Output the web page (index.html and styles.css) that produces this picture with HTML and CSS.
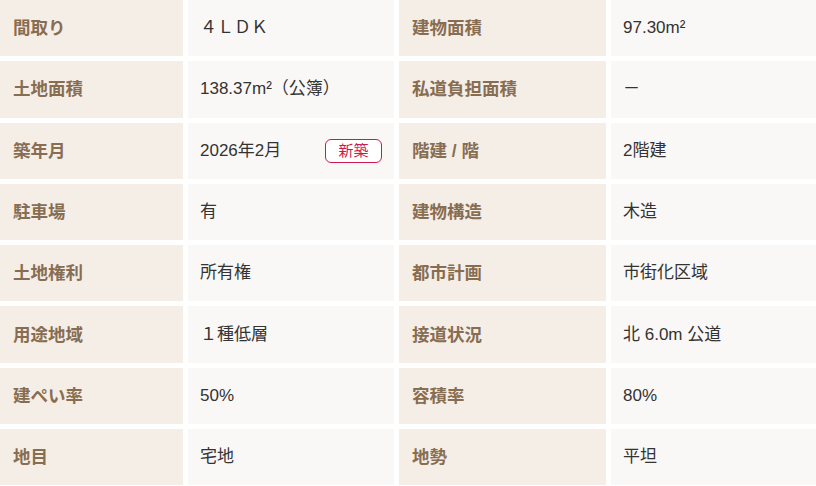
FILE: index.html
```html
<!DOCTYPE html>
<html lang="ja">
<head>
<meta charset="utf-8">
<title>物件概要</title>
<link rel="stylesheet" href="styles.css">
</head>
<body>
<div class="spec">
  <div class="lbl">間取り</div><div class="val">４ＬＤＫ</div>
  <div class="lbl">建物面積</div><div class="val">97.30m²</div>

  <div class="lbl">土地面積</div><div class="val">138.37m²（公簿）</div>
  <div class="lbl">私道負担面積</div><div class="val">－</div>

  <div class="lbl">築年月</div><div class="val val-badge"><span>2026年2月</span><span class="badge">新築</span></div>
  <div class="lbl">階建 / 階</div><div class="val">2階建</div>

  <div class="lbl">駐車場</div><div class="val">有</div>
  <div class="lbl">建物構造</div><div class="val">木造</div>

  <div class="lbl">土地権利</div><div class="val">所有権</div>
  <div class="lbl">都市計画</div><div class="val">市街化区域</div>

  <div class="lbl">用途地域</div><div class="val">１種低層</div>
  <div class="lbl">接道状況</div><div class="val">北 6.0m 公道</div>

  <div class="lbl">建ぺい率</div><div class="val">50%</div>
  <div class="lbl">容積率</div><div class="val">80%</div>

  <div class="lbl">地目</div><div class="val">宅地</div>
  <div class="lbl">地勢</div><div class="val">平坦</div>
</div>
</body>
</html>
```

FILE: styles.css
```css
html, body {
  margin: 0;
  padding: 0;
  background: #ffffff;
}

body {
  font-family: "Liberation Sans", "Noto Sans CJK JP", sans-serif;
  width: 816px;
  height: 486px;
  overflow: hidden;
}

.spec {
  display: grid;
  grid-template-columns: 183px 206px 207px 205px;
  grid-auto-rows: 56.3px;
  column-gap: 5px;
  row-gap: 5px;
}

.lbl {
  background: #f5eee7;
  color: #876d51;
  font-weight: bold;
  font-size: 17.5px;
  line-height: 24px;
  display: flex;
  align-items: center;
  padding: 0 13px;
}

.val {
  background: #faf8f6;
  color: #333333;
  font-size: 17px;
  line-height: 24px;
  display: flex;
  align-items: center;
  padding: 0 12px;
}

.val-badge {
  justify-content: space-between;
}

.badge {
  display: inline-flex;
  align-items: center;
  justify-content: center;
  box-sizing: border-box;
  width: 57px;
  height: 24px;
  border: 1px solid #cc1a4f;
  border-radius: 6px;
  background: #ffffff;
  color: #cc1a4f;
  font-size: 15px;
  line-height: 20px;
}
```
